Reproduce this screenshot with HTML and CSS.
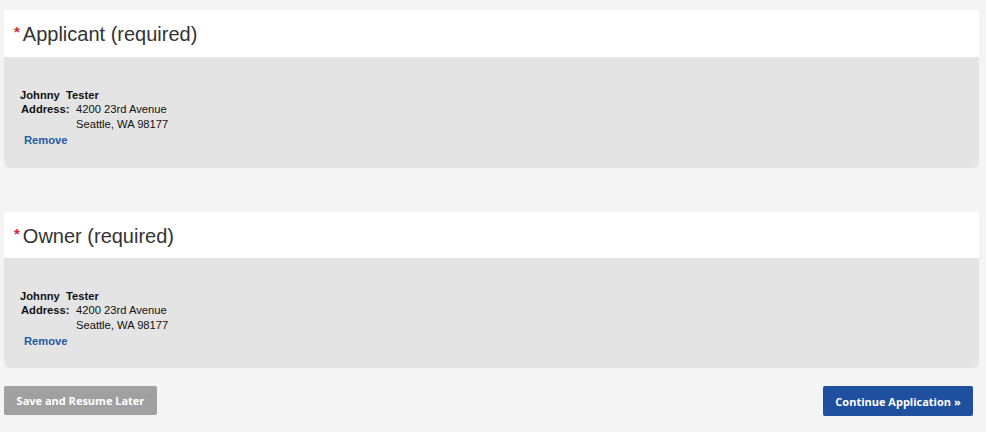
FILE: index.html
```html
<!DOCTYPE html>
<html>
<head>
<meta charset="utf-8">
<link rel="stylesheet" href="styles.css">
</head>
<body>
<div class="page">
  <section class="card">
    <h2 class="card-head"><span class="req">*</span>Applicant (required)</h2>
    <div class="card-body">
      <div class="name">Johnny&nbsp; Tester</div>
      <div class="addr">
        <span class="lbl">Address:</span>
        <span class="val">4200 23rd Avenue<br>Seattle, WA 98177</span>
      </div>
      <a class="remove" href="#">Remove</a>
    </div>
  </section>
  <section class="card">
    <h2 class="card-head"><span class="req">*</span>Owner (required)</h2>
    <div class="card-body">
      <div class="name">Johnny&nbsp; Tester</div>
      <div class="addr">
        <span class="lbl">Address:</span>
        <span class="val">4200 23rd Avenue<br>Seattle, WA 98177</span>
      </div>
      <a class="remove" href="#">Remove</a>
    </div>
  </section>
  <div class="actions">
    <button class="btn btn-save">Save and Resume Later</button>
    <button class="btn btn-continue">Continue Application »</button>
  </div>
</div>
</body>
</html>
```

FILE: styles.css
```css
html, body {
  margin: 0;
  padding: 0;
  background: #f4f4f4;
  font-family: "Liberation Sans", Arial, sans-serif;
  color: #222;
}
.page {
  padding: 10px 7px 0 4px;
  display: flex;
  flex-direction: column;
  gap: 44px;
}
.card {
  border-radius: 0 0 6px 6px;
  overflow: hidden;
}
.card-head {
  margin: 0;
  background: #fff;
  font-weight: normal;
  font-size: 20px;
  line-height: 24px;
  height: 24px;
  color: #333;
  padding: 12px 0 11px 10px;
}
.req {
  color: #d9262c;
  font-size: 15px;
  font-weight: bold;
  line-height: 0;
  position: relative;
  top: -4px;
  margin-right: 3px;
}
.card-body {
  background: #e4e4e4;
  padding: 31px 0 18px 16px;
  font-size: 11.2px;
  line-height: 15px;
  color: #111;
  height: 62px;
}
.name {
  font-weight: bold;
  margin-bottom: -1px;
}
.addr {
  display: flex;
  padding-left: 1px;
}
.lbl {
  font-weight: bold;
  width: 55px;
}
.remove {
  display: block;
  font-weight: bold;
  color: #1f5aa8;
  text-decoration: none;
  padding-left: 4px;
  margin-top: 1px;
}
.card:nth-child(2) .card-head {
  padding-bottom: 10px;
}
.card:nth-child(2) .card-body {
  height: 61px;
}
.actions {
  display: flex;
  justify-content: space-between;
  margin-top: -26px;
  padding-right: 6px;
}
.btn {
  border: none;
  border-radius: 2px;
  color: #fff;
  font-family: "Open Sans", Arial, sans-serif;
  font-weight: bold;
  font-size: 11px;
  height: 29px;
  padding: 0;
}
.btn-save {
  background: #a0a0a0;
  width: 153px;
}
.btn-continue {
  background: #1f4f9f;
  width: 150px;
  height: 30px;
}
```
